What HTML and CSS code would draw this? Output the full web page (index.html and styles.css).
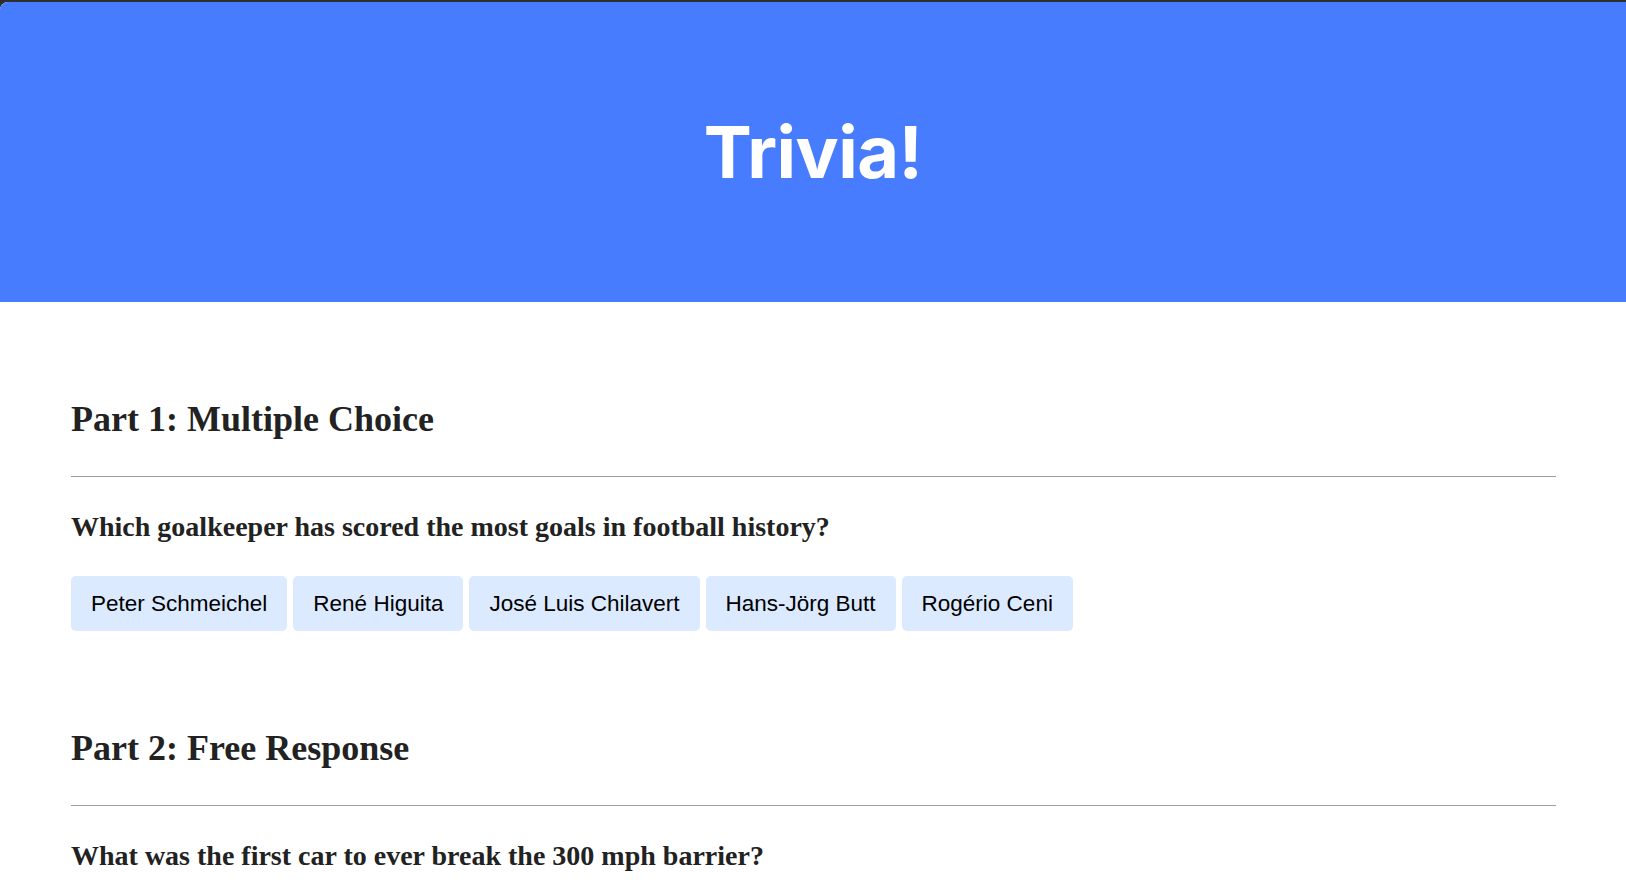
FILE: index.html
```html
<!DOCTYPE html>
<html lang="en">
<head>
<meta charset="utf-8">
<title>Trivia!</title>
<link rel="stylesheet" href="styles.css">
</head>
<body>
<div class="page">
  <header class="hero">
    <h1 class="hero-title">Trivia!</h1>
  </header>
  <main class="content">
    <section class="part">
      <h2 class="part-title">Part 1: Multiple Choice</h2>
      <hr class="divider">
      <h3 class="question">Which goalkeeper has scored the most goals in football history?</h3>
      <div class="choices">
        <button class="choice">Peter Schmeichel</button>
        <button class="choice">René Higuita</button>
        <button class="choice">José Luis Chilavert</button>
        <button class="choice">Hans-Jörg Butt</button>
        <button class="choice">Rogério Ceni</button>
      </div>
    </section>
    <section class="part">
      <h2 class="part-title">Part 2: Free Response</h2>
      <hr class="divider">
      <h3 class="question">What was the first car to ever break the 300 mph barrier?</h3>
    </section>
  </main>
</div>
</body>
</html>
```
FILE: styles.css
```css
html {
  background: #2e2e2e;
}
body {
  margin: 0;
  padding-top: 2px;
  font-family: "Liberation Serif", "Times New Roman", serif;
}
.page {
  background: #ffffff;
  border-top-left-radius: 8px;
  overflow: hidden;
  min-height: calc(100vh - 2px);
}
.hero {
  height: 300px;
  background: #487cff;
  display: flex;
  align-items: center;
  justify-content: center;
}
.hero-title {
  margin: 0;
  color: #ffffff;
  font-family: "Inter", "Open Sans", sans-serif;
  font-weight: 700;
  font-size: 72px;
  line-height: 1;
  letter-spacing: -0.5px;
}
.content {
  padding: 96.5px 70px 0 71px;
}
.part + .part {
  margin-top: 96.5px;
}
.part-title {
  margin: 0 0 36.5px;
  font-size: 36px;
  line-height: 41px;
  font-weight: 700;
  color: #222222;
}
.divider {
  margin: 0;
  border: 0;
  border-top: 1px solid #9e9e9e;
  height: 0;
}
.question {
  margin: 33.5px 0 33.5px;
  font-size: 28px;
  line-height: 32px;
  font-weight: 700;
  color: #222222;
}
.part:last-child .question {
  margin-bottom: 0;
}
.choices {
  display: flex;
  gap: 6px;
}
.choice {
  border: 0;
  border-radius: 5px;
  background: #dbeafe;
  color: #000000;
  font-family: "Liberation Sans", Arial, sans-serif;
  font-size: 22.5px;
  line-height: 26px;
  padding: 14.5px 20px;
  cursor: pointer;
}
```
